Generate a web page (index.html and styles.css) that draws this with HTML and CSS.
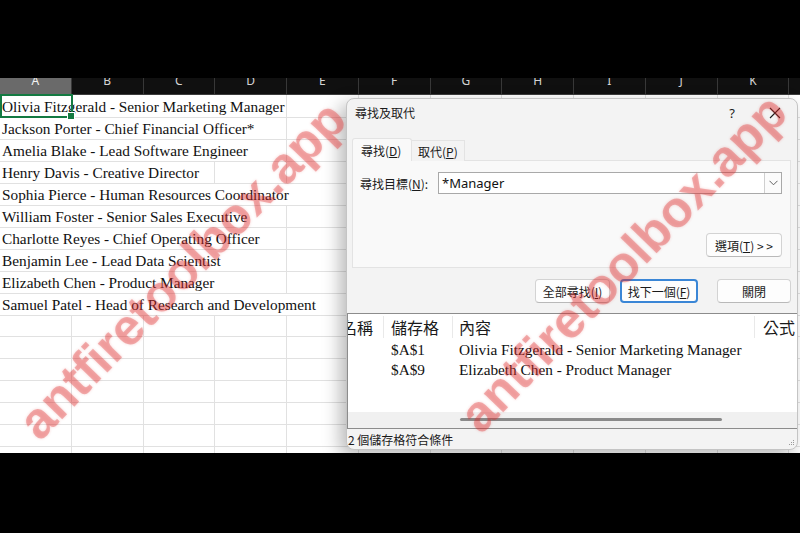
FILE: index.html
```html
<!DOCTYPE html>
<html lang="zh-Hant">
<head>
<meta charset="utf-8">
<title>尋找及取代</title>
<link rel="stylesheet" href="styles.css">
</head>
<body>
<div class="screen">
  <div class="band-top"></div>
  <div class="sheet">
    <div class="colhead">
      <div class="ch sel"><span>A</span></div>
      <div class="ch"><span>B</span></div>
      <div class="ch"><span>C</span></div>
      <div class="ch"><span>D</span></div>
      <div class="ch"><span>E</span></div>
      <div class="ch"><span>F</span></div>
      <div class="ch"><span>G</span></div>
      <div class="ch"><span>H</span></div>
      <div class="ch"><span>I</span></div>
      <div class="ch"><span>J</span></div>
      <div class="ch"><span>K</span></div>
      <div class="ch"><span>L</span></div>
    </div>
    <div class="grid">
      <div class="selbox"></div>
      <div class="row"><div class="cell txt s4">Olivia Fitzgerald - Senior Marketing Manager</div><div class="cell"></div><div class="cell"></div><div class="cell"></div><div class="cell"></div><div class="cell"></div><div class="cell"></div><div class="cell"></div><div class="cell"></div></div>
      <div class="row"><div class="cell txt s4">Jackson Porter - Chief Financial Officer*</div><div class="cell"></div><div class="cell"></div><div class="cell"></div><div class="cell"></div><div class="cell"></div><div class="cell"></div><div class="cell"></div><div class="cell"></div></div>
      <div class="row"><div class="cell txt s4">Amelia Blake - Lead Software Engineer</div><div class="cell"></div><div class="cell"></div><div class="cell"></div><div class="cell"></div><div class="cell"></div><div class="cell"></div><div class="cell"></div><div class="cell"></div></div>
      <div class="row"><div class="cell txt s3">Henry Davis - Creative Director</div><div class="cell"></div><div class="cell"></div><div class="cell"></div><div class="cell"></div><div class="cell"></div><div class="cell"></div><div class="cell"></div><div class="cell"></div><div class="cell"></div></div>
      <div class="row"><div class="cell txt s5">Sophia Pierce - Human Resources Coordinator</div><div class="cell"></div><div class="cell"></div><div class="cell"></div><div class="cell"></div><div class="cell"></div><div class="cell"></div><div class="cell"></div></div>
      <div class="row"><div class="cell txt s4">William Foster - Senior Sales Executive</div><div class="cell"></div><div class="cell"></div><div class="cell"></div><div class="cell"></div><div class="cell"></div><div class="cell"></div><div class="cell"></div><div class="cell"></div></div>
      <div class="row"><div class="cell txt s4">Charlotte Reyes - Chief Operating Officer</div><div class="cell"></div><div class="cell"></div><div class="cell"></div><div class="cell"></div><div class="cell"></div><div class="cell"></div><div class="cell"></div><div class="cell"></div></div>
      <div class="row"><div class="cell txt s4">Benjamin Lee - Lead Data Scientist</div><div class="cell"></div><div class="cell"></div><div class="cell"></div><div class="cell"></div><div class="cell"></div><div class="cell"></div><div class="cell"></div><div class="cell"></div></div>
      <div class="row"><div class="cell txt s4">Elizabeth Chen - Product Manager</div><div class="cell"></div><div class="cell"></div><div class="cell"></div><div class="cell"></div><div class="cell"></div><div class="cell"></div><div class="cell"></div><div class="cell"></div></div>
      <div class="row"><div class="cell txt s5">Samuel Patel - Head of Research and Development</div><div class="cell"></div><div class="cell"></div><div class="cell"></div><div class="cell"></div><div class="cell"></div><div class="cell"></div><div class="cell"></div></div>
      <div class="row"><div class="cell"></div><div class="cell"></div><div class="cell"></div><div class="cell"></div><div class="cell"></div><div class="cell"></div><div class="cell"></div><div class="cell"></div><div class="cell"></div><div class="cell"></div><div class="cell"></div><div class="cell"></div></div>
      <div class="row"><div class="cell"></div><div class="cell"></div><div class="cell"></div><div class="cell"></div><div class="cell"></div><div class="cell"></div><div class="cell"></div><div class="cell"></div><div class="cell"></div><div class="cell"></div><div class="cell"></div><div class="cell"></div></div>
      <div class="row"><div class="cell"></div><div class="cell"></div><div class="cell"></div><div class="cell"></div><div class="cell"></div><div class="cell"></div><div class="cell"></div><div class="cell"></div><div class="cell"></div><div class="cell"></div><div class="cell"></div><div class="cell"></div></div>
      <div class="row"><div class="cell"></div><div class="cell"></div><div class="cell"></div><div class="cell"></div><div class="cell"></div><div class="cell"></div><div class="cell"></div><div class="cell"></div><div class="cell"></div><div class="cell"></div><div class="cell"></div><div class="cell"></div></div>
      <div class="row"><div class="cell"></div><div class="cell"></div><div class="cell"></div><div class="cell"></div><div class="cell"></div><div class="cell"></div><div class="cell"></div><div class="cell"></div><div class="cell"></div><div class="cell"></div><div class="cell"></div><div class="cell"></div></div>
      <div class="row"><div class="cell"></div><div class="cell"></div><div class="cell"></div><div class="cell"></div><div class="cell"></div><div class="cell"></div><div class="cell"></div><div class="cell"></div><div class="cell"></div><div class="cell"></div><div class="cell"></div><div class="cell"></div></div>
      <div class="row"><div class="cell"></div><div class="cell"></div><div class="cell"></div><div class="cell"></div><div class="cell"></div><div class="cell"></div><div class="cell"></div><div class="cell"></div><div class="cell"></div><div class="cell"></div><div class="cell"></div><div class="cell"></div></div>
    </div>
  </div>
  <div class="band-bottom"></div>

  <div class="dialog">
    <div class="titlebar">
      <span class="title">尋找及取代</span>
      <span class="help">?</span>
      <span class="close"><svg width="12" height="12" viewBox="0 0 12 12"><path d="M1 1 L11 11 M11 1 L1 11" stroke="#1a1a1a" stroke-width="1.1" fill="none"/></svg></span>
    </div>
    <div class="body">
      <div class="tabs">
        <div class="tab active">尋找(<u>D</u>)</div>
        <div class="tab">取代(<u>P</u>)</div>
      </div>
      <div class="pane">
        <div class="findrow">
          <span class="label">尋找目標(<u>N</u>):</span>
          <div class="combo">
            <span class="val">*Manager</span>
            <span class="drop"><svg width="9" height="6" viewBox="0 0 9 6"><path d="M0.5 0.8 L4.5 4.8 L8.5 0.8" stroke="#606060" stroke-width="1" fill="none"/></svg></span>
          </div>
        </div>
        <div class="optrow"><span class="btn opt">選項(<u>T</u>) &gt; &gt;</span></div>
      </div>
      <div class="actions">
        <span class="btn b1">全部尋找(<u>I</u>)</span>
        <span class="btn b2 focus">找下一個(<u>F</u>)</span>
        <span class="btn b3">關閉</span>
      </div>
    </div>
    <div class="results">
      <div class="rhead">
        <div class="c1"><span class="cut">名稱</span></div>
        <div class="c2">儲存格</div>
        <div class="c3">內容</div>
        <div class="c4">公式</div>
      </div>
      <div class="rrow"><div class="c1"></div><div class="c2">$A$1</div><div class="c3">Olivia Fitzgerald - Senior Marketing Manager</div></div>
      <div class="rrow"><div class="c1"></div><div class="c2">$A$9</div><div class="c3">Elizabeth Chen - Product Manager</div></div>
      <div class="rfill"></div>
      <div class="hscroll"><div class="thumb"></div></div>
    </div>
    <div class="status">
      <span>2 個儲存格符合條件</span>
      <svg class="grip" width="7" height="7" viewBox="0 0 7 7"><g fill="#9a9a9a"><rect x="5" y="0" width="1" height="1"/><rect x="3" y="2" width="1" height="1"/><rect x="5" y="2" width="1" height="1"/><rect x="1" y="4" width="1" height="1"/><rect x="3" y="4" width="1" height="1"/><rect x="5" y="4" width="1" height="1"/></g></svg>
    </div>
  </div>

  <div class="wm wm1">antfiretoolbox.app</div>
  <div class="wm wm2">antfiretoolbox.app</div>
</div>
</body>
</html>
```

FILE: styles.css
```css
* { box-sizing: border-box; }
body { margin: 0; background: #000; }

.screen {
  position: relative;
  width: 800px;
  height: 533px;
  overflow: hidden;
  display: flex;
  flex-direction: column;
  background: #000;
}
.band-top { height: 78px; flex: none; background: #000; }
.sheet { height: 375px; flex: none; background: #fff; overflow: hidden; }
.band-bottom { flex: 1; background: #000; }

/* column headers */
.colhead {
  display: grid;
  grid-template-columns: repeat(12, 71.75px);
  height: 17px;
  background: #101010;
  border-bottom: 1px solid #3c3c3c;
}
.ch {
  border-right: 1px solid #383838;
  color: #d4d4d4;
  font-family: "Noto Sans", sans-serif;
  font-size: 12px;
  text-align: center;
  overflow: hidden;
}
.ch span { display: block; line-height: 16px; margin-top: -5px; }
.ch.sel { background: #6a6a6a; color: #f4f4f4; }

/* cells */
.grid { position: relative; }
.row {
  display: grid;
  grid-template-columns: repeat(12, 71.75px);
  height: 22px;
}
.cell {
  border-right: 1px solid #e1e1e1;
  border-bottom: 1px solid #e1e1e1;
}
.txt {
  font-family: "Liberation Serif", serif;
  font-size: 15.3px;
  line-height: 20px;
  padding: 2px 0 0 2px;
  white-space: nowrap;
  color: #111;
}
.s3 { grid-column: span 3; }
.s4 { grid-column: span 4; }
.s5 { grid-column: span 5; }

.selbox {
  position: absolute;
  left: 0;
  top: -1px;
  width: 73px;
  height: 24px;
  border: 2px solid #137a42;
}
.selbox::after {
  content: "";
  position: absolute;
  right: -4px;
  bottom: -4px;
  width: 6px;
  height: 6px;
  background: #137a42;
  border: 1px solid #fff;
}

/* dialog */
.dialog {
  position: absolute;
  left: 346px;
  top: 98px;
  width: 452px;
  height: 352px;
  background: #f3f3f3;
  border: 1px solid #c4c4c4;
  border-radius: 8px;
  box-shadow: -6px 6px 18px rgba(0, 0, 0, 0.28);
  display: flex;
  flex-direction: column;
  overflow: hidden;
  font-family: "Noto Sans CJK TC", "Noto Sans", sans-serif;
  font-size: 12px;
  color: #1a1a1a;
}
.titlebar {
  height: 27px;
  flex: none;
  display: flex;
  align-items: center;
  padding-left: 8px;
}
.title { font-size: 12px; }
.help { margin-left: auto; margin-right: 34px; font-family: "Noto Sans", sans-serif; font-size: 13px; }
.close { display: flex; margin-right: 16px; }

.body { padding: 0 6px 0 5px; flex: none; }
.tabs {
  margin-top: 12px;
  display: flex;
  align-items: flex-end;
  height: 23px;
  margin-bottom: -1px;
}
.tab {
  height: 21px;
  padding: 0 6px;
  border: 1px solid #e3e3e3;
  border-bottom: none;
  border-left: none;
  display: flex;
  align-items: center;
  background: #f3f3f3;
}
.tab.active {
  position: relative;
  height: 23px;
  padding: 0 8px;
  width: 60px;
  border-left: 1px solid #e3e3e3;
  border-radius: 3px 3px 0 0;
  background: #f9f9f9;
}
.pane {
  height: 108px;
  border: 1px solid #e3e3e3;
  background: #f9f9f9;
  padding: 11px 8px 10px 7px;
  display: flex;
  flex-direction: column;
}
.findrow { display: flex; align-items: center; height: 22px; }
.label { width: 78px; flex: none; }
.combo {
  flex: 1;
  height: 22px;
  background: #fff;
  border: 1px solid #a9a9a9;
  display: flex;
  align-items: center;
  justify-content: space-between;
}
.val {
  padding-left: 3px;
  font-family: "Noto Sans", sans-serif;
  font-size: 13px;
  color: #111;
}
.drop {
  width: 17px;
  height: 20px;
  border-left: 1px solid #cfcfcf;
  background: #fbfbfb;
  display: flex;
  align-items: center;
  justify-content: center;
}
.optrow { margin-top: auto; display: flex; justify-content: flex-end; }

.btn {
  height: 24px;
  display: flex;
  align-items: center;
  justify-content: center;
  background: #fdfdfd;
  border: 1px solid #d3d3d3;
  border-bottom-color: #b9b9b9;
  border-radius: 4px;
  font-size: 12px;
  white-space: nowrap;
}
.opt { width: 76px; }
.actions {
  margin-top: 11px;
  display: flex;
  justify-content: flex-end;
}
.b1 { width: 75px; }
.b2 { width: 78px; margin-left: 10px; }
.b3 { width: 74px; margin-left: 19px; }
.focus { border: 2px solid #3a86d6; }

.results {
  margin-top: 10px;
  height: 116px;
  flex: none;
  background: #fff;
  border: 1px solid #8c8c8c;
  border-right: none;
  display: flex;
  flex-direction: column;
  overflow: hidden;
}
.rhead, .rrow { display: flex; flex: none; }
.rhead { height: 26px; align-items: center; font-size: 16px; color: #1a1a1a; }
.rhead > div { height: 22px; line-height: 22px; border-right: 1px solid #e9e9e9; white-space: nowrap; overflow: hidden; }
.rhead .c4 { border-right: none; }
.c1 { width: 36px; flex: none; }
.c2 { width: 69px; flex: none; padding-left: 7px; }
.c3 { width: 302px; flex: none; padding-left: 6px; }
.c4 { flex: 1; padding-left: 8px; }
.cut { display: block; text-align: right; padding-right: 11px; width: 36px; direction: rtl; }
.rrow {
  height: 20px;
  font-family: "Liberation Serif", serif;
  font-size: 15.3px;
  line-height: 19px;
  white-space: nowrap;
  color: #111;
}
.rrow > div { overflow: hidden; }
.rfill { flex: 1; }
.hscroll { height: 16px; flex: none; background: #f0f0f0; padding-top: 6px; }
.thumb { margin-left: 112px; width: 262px; height: 3px; border-radius: 2px; background: #8a8a8a; }

.status {
  flex: 1;
  display: flex;
  align-items: center;
  justify-content: space-between;
  padding: 0 2px 0 1px;
  font-size: 12px;
}
.grip { align-self: flex-end; margin-bottom: 2px; }

/* watermark */
.wm {
  position: absolute;
  white-space: nowrap;
  font-family: "Liberation Sans", sans-serif;
  font-weight: bold;
  font-size: 51px;
  color: rgba(222, 40, 40, 0.33);
  text-shadow: 0 0 3px rgba(222, 40, 40, 0.2);
  transform: translate(-50%, -50%) rotate(-46deg);
  pointer-events: none;
}
.wm1 { left: 182px; top: 270px; }
.wm2 { left: 623px; top: 263px; }
```
